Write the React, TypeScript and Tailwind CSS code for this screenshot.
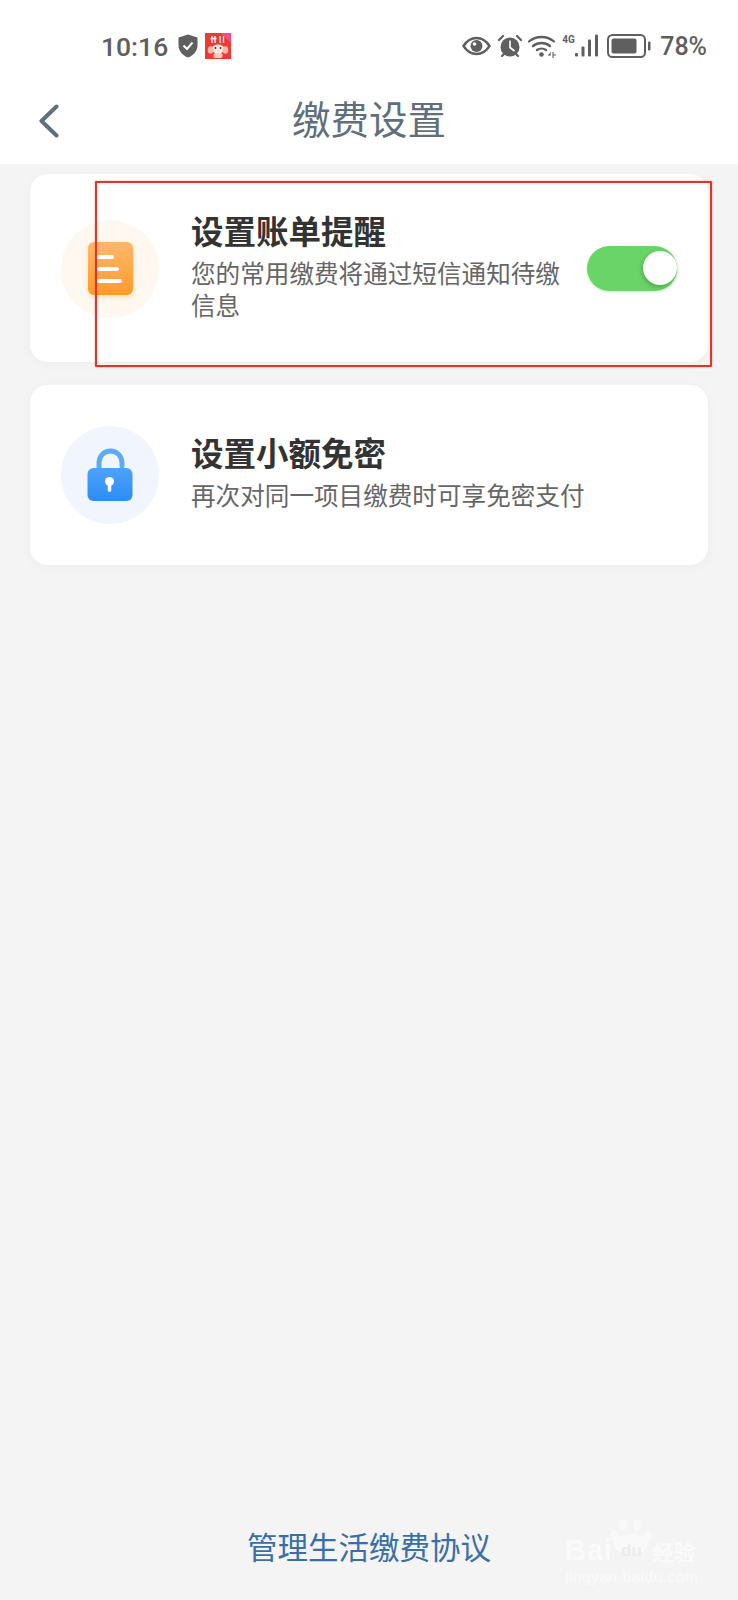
import React from 'react';

const CJK = "font-['Noto_Sans_CJK_SC','Noto_Sans',sans-serif]";

const StatusIcons = () => (
  <div className="flex items-center">
    {/* eye */}
    <svg width="29" height="20" viewBox="0 0 29 20">
      <path d="M1.5 10C5 4.5 9.5 2 14.500 2S24 4.500 27.500 10C24 15.500 19.500 18 14.500 18S5 15.500 1.500 10Z" fill="none" stroke="#5f5f5f" strokeWidth="2.400" />
      <circle cx="14.500" cy="10" r="6" fill="#5f5f5f" />
      <circle cx="12.500" cy="8" r="1.800" fill="#fff" />
    </svg>
    {/* alarm */}
    <svg width="26" height="24" viewBox="0 0 26 24" className="ml-[6px]">
      <circle cx="13" cy="13" r="9.500" fill="#5f5f5f" />
      <path d="M13 6.500V13.500L17.500 17" fill="none" stroke="#fff" strokeWidth="1.600" />
      <path d="M2 6L6 2M24 6L20 2M5 22L7 20M21 22L19 20" stroke="#5f5f5f" strokeWidth="2.200" strokeLinecap="round" />
    </svg>
    {/* wifi */}
    <svg width="28" height="24" viewBox="0 0 28 24" className="ml-[5px]">
      <path d="M1 7.500C8 1.500 19 1.500 26 7.500M5 12C10 8 17 8 22 12M9 16C11.500 14.200 15.500 14.200 18 16" fill="none" stroke="#5f5f5f" strokeWidth="2.300" strokeLinecap="round" />
      <circle cx="13.500" cy="20.500" r="2.300" fill="#5f5f5f" />
      <path d="M20 21H23M25 21H28M23 18.500L21 21M25 24V18" stroke="#5f5f5f" strokeWidth="1.100" />
    </svg>
    {/* 4G + signal */}
    <div className="relative ml-[6px] h-[24px] w-[38px]">
      <span className="absolute left-0 top-0 font-['Roboto',sans-serif] text-[10px] font-bold leading-[12px] text-[#5f5f5f]">4G</span>
      <svg width="25" height="24" viewBox="0 0 25 24" className="absolute right-0 top-0">
        <rect x="0" y="19" width="3" height="3.500" rx="1" fill="#5f5f5f" />
        <rect x="6.500" y="12.500" width="3" height="10" rx="1" fill="#5f5f5f" />
        <rect x="13" y="5.500" width="3" height="17" rx="1" fill="#5f5f5f" />
        <rect x="20" y="0.500" width="3" height="22" rx="1" fill="#5f5f5f" />
      </svg>
    </div>
    {/* battery */}
    <svg width="44" height="24" viewBox="0 0 44 24" className="ml-[7px]">
      <rect x="1" y="1" width="37" height="22" rx="4.500" fill="none" stroke="#5f5f5f" strokeWidth="2" />
      <rect x="4.500" y="4.500" width="25" height="15" rx="2" fill="#5f5f5f" />
      <rect x="41" y="7.500" width="2.500" height="9" rx="1" fill="#5f5f5f" />
    </svg>
    <span className="ml-[9px] mt-[2px] font-['Roboto',sans-serif] text-[25px] font-medium leading-none text-[#5f5f5f]">78%</span>
  </div>
);

const AppBadge = () => (
  <svg width="26" height="26" viewBox="0 0 26 26" className="ml-[7px]">
    <rect width="26" height="26" fill="#ee3a37" />
    <path d="M16 0H26V10Z" fill="#ef4f88" />
    <path d="M7 3V10M10 3V10M5.500 5.500H11.500M15 3V10M18.500 3V10" stroke="#fff" strokeWidth="1.300" />
    <ellipse cx="13" cy="16" rx="6.500" ry="4.500" fill="#fde7dc" />
    <ellipse cx="5.500" cy="17" rx="2.800" ry="3.800" fill="#f7b9a6" />
    <ellipse cx="20.500" cy="17" rx="2.800" ry="3.800" fill="#f7b9a6" />
    <rect x="8.500" y="20" width="9" height="5" rx="2" fill="#f9cdbd" />
    <circle cx="10.500" cy="15" r="0.900" fill="#333" />
    <circle cx="15.500" cy="15" r="0.900" fill="#333" />
  </svg>
);

const BillIcon = () => (
  <div className="mt-[2px] flex h-[98px] w-[98px] shrink-0 items-center justify-center rounded-full bg-[#fff8f0] pb-[2px]">
    <div className="flex h-[53px] w-[45px] flex-col gap-[8px] rounded-[6px] bg-gradient-to-b from-[#ffb76a] to-[#ff9a24] pl-[9px] pt-[13px] shadow-[0_2px_5px_rgba(255,160,60,0.3)]">
      <div className="h-[4px] w-[17px] rounded-full bg-white" />
      <div className="h-[4px] w-[22px] rounded-full bg-white" />
      <div className="h-[4px] w-[25px] rounded-full bg-white" />
    </div>
  </div>
);

const LockIcon = () => (
  <div className="flex h-[98px] w-[98px] shrink-0 items-center justify-center rounded-full bg-[#f0f5fe]">
    <svg width="46" height="54" viewBox="0 0 46 54">
      <defs>
        <linearGradient id="lockBody" x1="0" y1="0" x2="0" y2="1">
          <stop offset="0" stopColor="#4da3fb" />
          <stop offset="1" stopColor="#2c8cf6" />
        </linearGradient>
      </defs>
      <path d="M12 22V15C12 8 17 3 23.500 3S35 8 35 15V18" fill="none" stroke="#5fabf3" strokeWidth="5" strokeLinecap="round" />
      <rect x="0.500" y="20" width="45" height="33" rx="6" fill="url(#lockBody)" />
      <circle cx="22.500" cy="33.500" r="4.500" fill="#fff" />
      <rect x="20.800" y="34" width="3.400" height="10" rx="1.700" fill="#fff" />
    </svg>
  </div>
);

const Toggle = () => (
  <div className="ml-auto flex h-[45px] w-[90px] shrink-0 items-center justify-end rounded-full bg-[#6bd468] shadow-[0_1px_3px_rgba(107,212,104,0.4)]">
    <div className="h-[34px] w-[34px] rounded-full bg-white shadow-[-1px_2px_4px_rgba(40,110,40,0.45)]" />
  </div>
);

const Watermark = () => (
  <div className="absolute left-[565px] top-[1518px] h-[68px] w-[136px] text-white/60">
    <svg width="50" height="36" viewBox="0 0 50 36" className="absolute left-[41px] top-0">
      <g fill="#f9f9f9">
        <ellipse cx="8" cy="18" rx="4" ry="5" />
        <ellipse cx="17" cy="7" rx="4" ry="5.500" />
        <ellipse cx="31" cy="7" rx="4" ry="5.500" />
        <ellipse cx="42" cy="18" rx="4" ry="5" />
        <ellipse cx="25" cy="26" rx="17" ry="10" />
      </g>
    </svg>
    <span className="absolute left-0 top-[17px] font-['Liberation_Sans',sans-serif] text-[29px] font-bold leading-[30px] tracking-[1px]">Bai</span>
    <span className="absolute left-[56px] top-[24px] font-['Liberation_Sans',sans-serif] text-[17px] font-bold leading-[18px] text-[#ececec]">du</span>
    <span className={`absolute left-[88px] top-[20px] ${CJK} text-[21px] font-bold leading-[26px]`}>经验</span>
    <span className="absolute left-0 top-[50px] font-['Liberation_Sans',sans-serif] text-[15.500px] leading-[18px] tracking-[0.500px]">jingyan.baidu.com</span>
  </div>
);

export default function App() {
  return (
    <div className={`relative flex h-[1600px] w-[738px] flex-col overflow-hidden bg-[#f4f4f4] ${CJK}`}>
      {/* status bar + title */}
      <div className="h-[164px] shrink-0 bg-white">
        <div className="flex h-[92px] items-center justify-between pb-[1px] pl-[101px] pr-[31px]">
          <div className="flex items-center">
            <span className="mt-[3px] font-['Roboto',sans-serif] text-[26.500px] font-medium leading-none text-[#5f5f5f]">10:16</span>
            <svg width="20" height="24" viewBox="0 0 20 24" className="ml-[10px]">
              <path d="M10 0.500L19.500 3.500V11C19.500 17 15.500 21.500 10 23.500C4.500 21.500 0.500 17 0.500 11V3.500Z" fill="#5f5f5f" />
              <path d="M5.500 11.500L9 15L14.500 8.500" fill="none" stroke="#fff" strokeWidth="2" />
            </svg>
            <AppBadge />
          </div>
          <StatusIcons />
        </div>
        <div className="relative flex h-[56px] items-center justify-center pb-[6px]">
          <svg width="22" height="34" viewBox="0 0 22 34" className="absolute left-[38px] top-[12px]">
            <path d="M18.500 2.500L3.500 17L18.500 31.500" fill="none" stroke="#5c7080" strokeWidth="4" strokeLinecap="round" strokeLinejoin="round" />
          </svg>
          <span className="text-[38.500px] leading-none text-[#5f6f7b]">缴费设置</span>
        </div>
      </div>

      {/* cards */}
      <div className="mt-[10px] flex flex-col gap-[23px] px-[30px]">
        <div className="flex h-[188px] items-center rounded-[18px] bg-white pl-[31px] pr-[31px] shadow-[0_2px_12px_rgba(0,0,0,0.03)]">
          <BillIcon />
          <div className="ml-[32px] w-[372px] pb-[7px]">
            <div className="text-[32.500px] font-bold leading-[40px] text-[#333333]">设置账单提醒</div>
            <div className="mt-[6px] text-[24.600px] leading-[32px] text-[#666666]">您的常用缴费将通过短信通知待缴信息</div>
          </div>
          <Toggle />
        </div>

        <div className="flex h-[180px] items-center rounded-[18px] bg-white pl-[31px] pr-[31px] shadow-[0_2px_12px_rgba(0,0,0,0.03)]">
          <LockIcon />
          <div className="ml-[32px] pb-[9px]">
            <div className="text-[32.500px] font-bold leading-[40px] text-[#333333]">设置小额免密</div>
            <div className="mt-[6px] text-[24.600px] leading-[32px] text-[#666666]">再次对同一项目缴费时可享免密支付</div>
          </div>
        </div>
      </div>

      {/* footer link */}
      <div className="mt-auto flex h-[104px] justify-center pt-[30px]">
        <span className="text-[30.500px] leading-[40px] text-[#3a6ea8]">管理生活缴费协议</span>
      </div>

      <Watermark />

      {/* red annotation box */}
      <div className="absolute left-[95px] top-[181px] h-[186px] w-[617px] rounded-[1px] border-2 border-[#e0352c] shadow-[0_0_2px_rgba(224,53,44,0.5)]" />
    </div>
  );
}
